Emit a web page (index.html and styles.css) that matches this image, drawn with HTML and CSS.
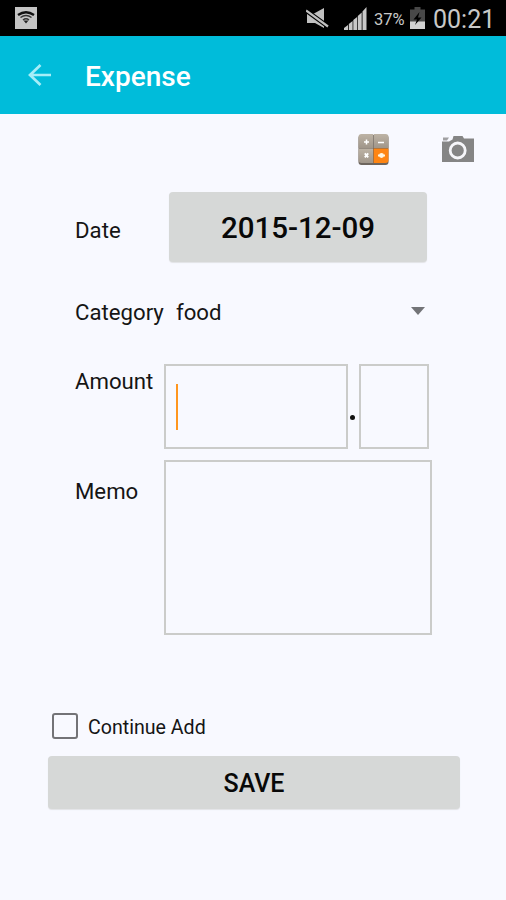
FILE: index.html
```
<!DOCTYPE html>
<html lang="en">
<head>
	<meta charset="UTF-8">
	<title>Expense</title>
	<link rel="stylesheet" href="styles.css">
</head>
<body>
	<div class="status">
		<svg class="wifi" width="22" height="22" viewBox="0 0 22 22">
			<rect width="22" height="22" fill="#c4c4c4"/>
			<path d="M3 8Q11 2.500 19 8" fill="none" stroke="#111" stroke-width="2.400"/>
			<path d="M5.500 10.500Q11 6.500 16.500 10.500M8 13Q11 10.500 14 13" fill="none" stroke="#333" stroke-width="1.500"/>
			<path d="M8.500 13.500h5L11 16.500z" fill="#222"/>
		</svg>
		<svg class="mute" width="23" height="22" viewBox="0 0 23 22">
			<path d="M1 5.500h7L18 0v20L9 15H1z" fill="#c0c0c0"/>
			<path d="M0 2.500L22 18.500" stroke="#000" stroke-width="4.600"/>
			<path d="M0 2.500L22 18.500" stroke="#c0c0c0" stroke-width="2.200"/>
		</svg>
		<svg class="signal" width="23" height="23" viewBox="0 0 23 23">
			<path d="M0 23v-2l4-3v5zM4.800 23v-6l3.800-3v9zM9.300 23V13l3.800-3v13zM13.800 23V9l3.900-3.500V23zM18.500 23V4.500L22.500 0v23z" fill="#c8c8c8"/>
		</svg>
		<span class="percent">37%</span>
		<svg class="battery" width="15" height="22" viewBox="0 0 15 22">
			<path d="M4.500 0h6v2.500H15V22H0V2.500h4.500z" fill="#484848"/>
			<path d="M0 14.500h15V22H0z" fill="#d2d2d2"/>
			<path d="M9.500 5L3.500 12.500h3.500L5 18l6.500-7.500H8z" fill="#000"/>
		</svg>
		<span class="clock">00:21</span>
	</div>
	<div class="header">
		<svg class="back" width="23" height="22" viewBox="0 0 23 22">
			<path d="M23 11H2M12.500 1L2 11l10.500 10" fill="none" stroke="#a6eef8" stroke-width="2.700"/>
		</svg>
		<h1>Expense</h1>
	</div>
	<div class="tools">
		<svg class="calc" width="31" height="31" viewBox="0 0 31 31">
			<defs>
				<linearGradient id="key" x1="0" y1="0" x2="0" y2="1">
					<stop offset="0" stop-color="#bdb3a5"/>
					<stop offset="1" stop-color="#a0968a"/>
				</linearGradient>
			</defs>
			<rect x="0.500" y="1" width="30" height="30" rx="3" fill="#6d655e"/>
			<path d="M3.500 0H15v14H.500V3a3 3 0 0 1 3-3z" fill="url(#key)"/>
			<path d="M15.600 0h11.900a3 3 0 0 1 3 3v11H15.600z" fill="url(#key)"/>
			<path d="M.500 14.600H15V29H3.500a3 3 0 0 1-3-3z" fill="url(#key)"/>
			<path d="M15.600 14.600h14.900V26a3 3 0 0 1-3 3H15.600z" fill="#ff8512"/>
			<path d="M6 8h5M8.500 5.500v5M20 8.500h6" stroke="#fff" stroke-width="1.500"/>
			<path d="M6.800 19.300l3.400 4M10.200 19.300l-3.400 4" stroke="#fff" stroke-width="1.900"/>
			<path d="M20 21.500h7" stroke="#fff5df" stroke-width="2"/>
			<circle cx="23.500" cy="21.500" r="2.400" fill="#fff5df"/>
		</svg>
		<svg class="camera" width="32" height="26" viewBox="0 0 32 26">
			<path d="M0 5.500h7l3.500-2 1-3.500h9l1.500 2.500H32V26H0z" fill="#858585"/>
			<path d="M1 1.500h6L5 4.500H1z" fill="#a0a0a2"/>
			<circle cx="15.700" cy="14.500" r="7.500" fill="#858585" stroke="#f6f6fa" stroke-width="2.800"/>
		</svg>
	</div>
	<div class="form">
		<div class="row date_row">
			<label>Date</label>
			<div class="btn date_btn">2015-12-09</div>
		</div>
		<div class="row cate_row">
			<label>Category</label>
			<div class="select">
				<span>food</span>
				<i class="arrow"></i>
			</div>
		</div>
		<div class="row amount_row">
			<label>Amount</label>
			<div class="box amount"><i class="cursor"></i></div>
			<i class="dot"></i>
			<div class="box cents"></div>
		</div>
		<div class="row memo_row">
			<label>Memo</label>
			<div class="box memo"></div>
		</div>
	</div>
	<div class="continue">
		<i class="check"></i>
		<span>Continue Add</span>
	</div>
	<div class="btn save">SAVE</div>
</body>
</html>
```

FILE: styles.css
```
body{margin: 0; height: 900px; background-color: #f8f9ff; font-family: Roboto, "Liberation Sans", sans-serif; font-size: 22.2px; color: #151515; overflow: hidden;}
svg{display: block; flex: none;}
i{display: block; flex: none;}

/*status bar*/
.status{display: flex; height: 36px; background-color: #000; color: #c8c8c8;}
.wifi{margin: 7px 0 0 15px;}
.mute{margin: 8px 0 0 269px;}
.signal{margin: 7px 0 0 15px;}
.percent{width: 31px; margin: 0 5px 0 7px; font-size: 16.5px; line-height: 39px;}
.battery{margin-top: 7px;}
.clock{margin-left: 8px; font-size: 25px; line-height: 40px;}

/*header*/
.header{display: flex; align-items: center; height: 78px; background-color: #00bcda;}
.back{margin-left: 28px;}
h1{margin: 3px 0 0 34px; font-size: 28px; font-weight: 500; color: #fff;}

.tools{display: flex; height: 78px;}
.calc{margin: 20px 0 0 358px;}
.camera{margin: 22px 0 0 53px;}

/*form*/
.form{padding-left: 75px;}
.row{display: flex;}
label{flex: none; width: 89px; line-height: 26px;}
.btn{box-sizing: border-box; border-radius: 4px; background-color: #d6d8d7; text-align: center; font-weight: 500; color: #080808; box-shadow: 0 1px 1px #e2e3e6;}
.box{box-sizing: border-box; border: 2px solid #cbccca;}

.date_row{height: 70px; align-items: center;}
.date_row label{padding-top: 6px;}
.date_btn{width: 258px; height: 70px; margin-left: 5px; font-size: 29.5px; line-height: 73px;}

.cate_row{height: 102px; align-items: center;}
.cate_row label{margin-bottom: 2px;}
.select{display: flex; align-items: center; width: 261px; margin-bottom: 2px; padding-left: 12px; line-height: 26px;}
.select span{flex: 1;}
.arrow{margin: 0 12px 2px 0; border: 7px solid transparent; border-top: 8px solid #737478; border-bottom: 0;}

.amount_row label{padding-top: 4px;}
.amount{width: 184px; height: 85px; padding: 18px 0 0 10px;}
.cursor{width: 2px; height: 46px; background-color: #ff961f;}
.dot{width: 5px; height: 5px; margin: 51px 4px 0 2px; border-radius: 50%; background-color: #111;}
.cents{width: 70px; height: 85px;}

.memo_row{margin-top: 11px;}
.memo_row label{padding-top: 18px;}
.memo{width: 268px; height: 175px;}

.continue{display: flex; align-items: center; height: 26px; margin: 78px 0 17px 52px; font-size: 19.6px;}
.continue span{padding-top: 2px;}
.check{box-sizing: border-box; width: 26px; height: 26px; margin-right: 10px; border: 2px solid #737377; border-radius: 3px;}
.save{width: 412px; height: 53px; margin-left: 48px; font-size: 25px; line-height: 56px;}
```
